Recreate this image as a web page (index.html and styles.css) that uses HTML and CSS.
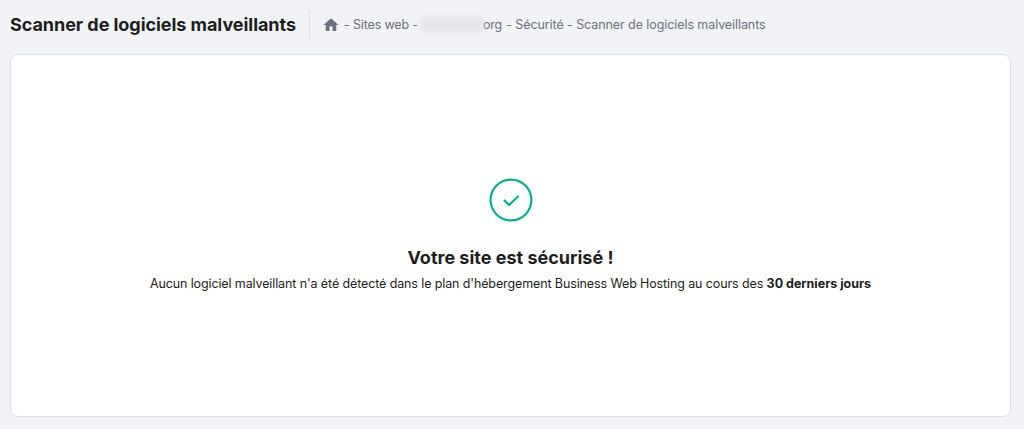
FILE: index.html
```html
<!DOCTYPE html>
<html lang="fr">
<head>
    <meta charset="UTF-8">
    <title>Scanner de logiciels malveillants</title>
    <link rel="stylesheet" href="styles.css">
</head>
<body>
    <header class="page-header">
        <h1>Scanner de logiciels malveillants</h1>
        <nav class="breadcrumbs">
            <svg class="home-icon" viewBox="0 0 24 24" width="18" height="18"><path d="M10 20v-6h4v6h5v-8h3L12 3 2 12h3v8z"/></svg>
            <span class="first">- Sites web -</span>
            <span class="blurred"></span>
            <span class="domain">org</span>
            <span class="last">- Sécurité - Scanner de logiciels malveillants</span>
        </nav>
    </header>
    <main class="card">
        <svg class="check-icon" viewBox="0 0 44 44" width="44" height="44">
            <circle cx="22" cy="22" r="20.4"/>
            <path d="M15.5 22.5l4.5 4.5 9-8.5"/>
        </svg>
        <h2>Votre site est sécurisé !</h2>
        <p>Aucun logiciel malveillant n'a été détecté dans le plan d'hébergement Business Web Hosting au cours des <strong>30 derniers jours</strong></p>
    </main>
</body>
</html>
```

FILE: styles.css
```css
:root {
    --page-bg: #f2f3f6;
    --border: #dfe0e5;
    --text: #1d1e20;
    --muted: #6d7081;
    --green: #00b090;
}

html, body {
    height: 100%;
}

body {
    margin: 0;
    padding: 0 13px 12px 10px;
    box-sizing: border-box;
    display: flex;
    flex-direction: column;
    background: var(--page-bg);
    color: var(--text);
    font-family: "Inter", "Liberation Sans", sans-serif;
}

.page-header {
    display: flex;
    align-items: center;
    height: 54px;
    padding-bottom: 5px;
    box-sizing: border-box;
}

h1 {
    margin: 0;
    padding-right: 13px;
    font-size: 18px;
    font-weight: 700;
    letter-spacing: -0.05px;
    white-space: nowrap;
}

.breadcrumbs {
    display: flex;
    align-items: center;
    height: 29px;
    padding-left: 12px;
    border-left: 1px solid var(--border);
    color: var(--muted);
    font-size: 12.5px;
    letter-spacing: -0.15px;
    white-space: nowrap;
}

.breadcrumbs span {
    margin-left: 4px;
}

.breadcrumbs .last {
    letter-spacing: -0.08px;
}

.home-icon {
    fill: var(--muted);
}

.breadcrumbs .blurred {
    width: 62px;
    height: 15px;
    margin-left: 3px;
    background: #e4e5e8;
    filter: blur(2px);
}

.breadcrumbs .domain {
    margin-left: 0;
}

.card {
    flex: 1;
    display: flex;
    flex-direction: column;
    align-items: center;
    padding-top: 123px;
    background: #fff;
    border: 1px solid var(--border);
    border-radius: 8px;
}

.check-icon {
    fill: none;
    stroke: var(--green);
    stroke-width: 2.2;
}

.check-icon path {
    stroke-linecap: round;
    stroke-linejoin: round;
}

h2 {
    margin: 24px 0 0;
    font-size: 18px;
    line-height: 24px;
    font-weight: 700;
}

p {
    margin: 5px 0 0;
    font-size: 12.5px;
    line-height: 18px;
    letter-spacing: -0.115px;
}

strong {
    font-weight: 700;
    letter-spacing: 0;
}
```
